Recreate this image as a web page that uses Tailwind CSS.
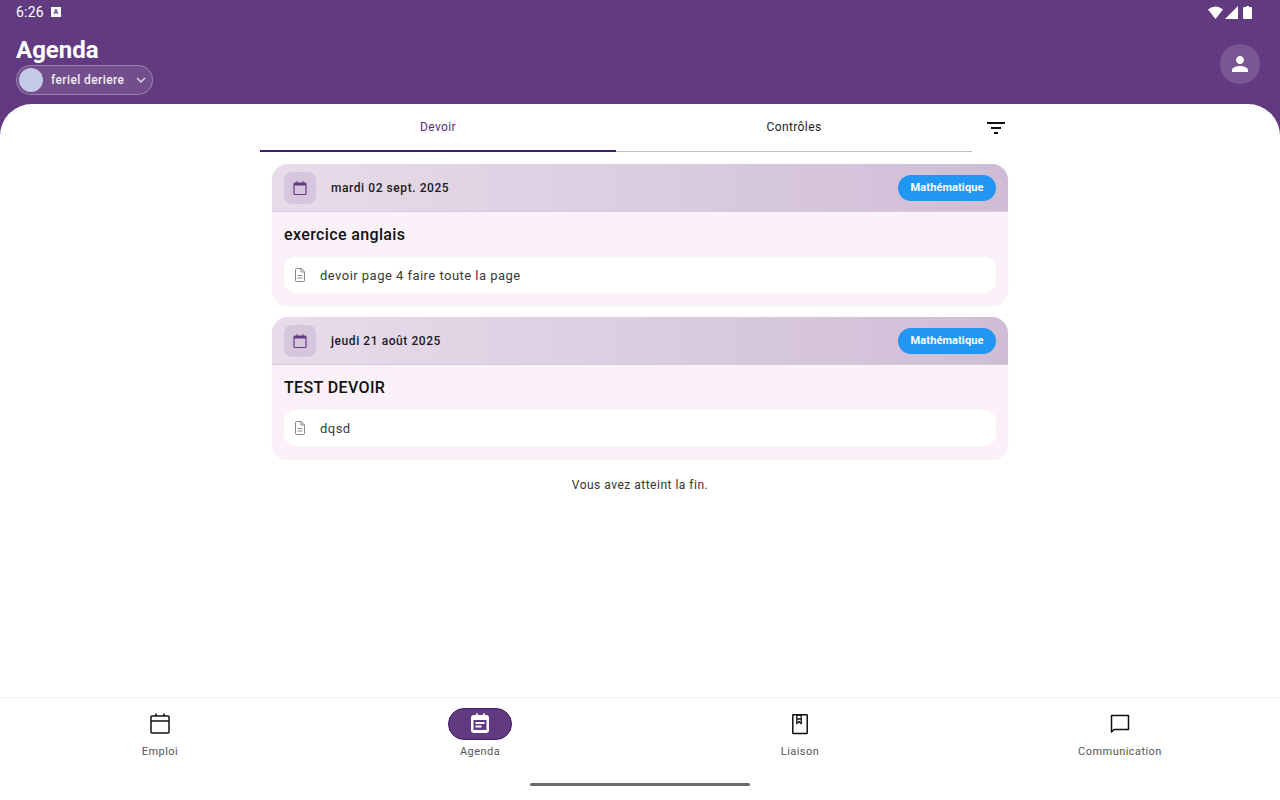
<!DOCTYPE html>
<html lang="fr">
  <head>
    <meta charset="UTF-8" />
    <title>Agenda</title>
    <script src="https://cdn.jsdelivr.net/npm/@tailwindcss/browser@4"></script>
  </head>
  <body class="w-[1280px] h-[800px] overflow-hidden bg-white font-['Roboto',sans-serif]">
    <div class="flex flex-col h-full">
      <!-- en-tete violet -->
      <header class="h-[104px] bg-[#623a80] text-white shrink-0">
        <div class="h-6 flex items-center justify-between pl-4 pr-[28px]">
          <div class="flex items-center gap-[7px]">
            <span class="text-sm leading-6 tracking-[0.2px]">6:26</span>
            <span class="w-[10px] h-[10px] bg-white flex items-center justify-center text-[7px] font-bold leading-none text-[#623a80]">A</span>
          </div>
          <div class="flex items-center gap-[2px]">
            <svg width="15" height="13" viewBox="0 0 15 13"><path d="M0 3.500 Q7.500 -2.500 15 3.500 L7.500 13 Z" fill="#fff" /></svg>
            <svg width="13" height="13" viewBox="0 0 13 13"><path d="M13 0 V13 H0 Z" fill="#fff" /></svg>
            <svg class="ml-[3px]" width="9" height="13" viewBox="0 0 9 13"><path d="M3 0 H6 V1 H8 Q9 1 9 2 V12 Q9 13 8 13 H1 Q0 13 0 12 V2 Q0 1 1 1 H3 Z" fill="#fff" /></svg>
          </div>
        </div>
        <div class="flex items-start justify-between pl-4 pr-5 pt-[10px]">
          <div class="pt-[2px]">
            <h1 class="text-[24px] leading-[28px] font-bold">Agenda</h1>
            <div class="mt-[1px] w-[137px] h-[30px] rounded-full bg-white/10 border border-white/30 flex items-center pl-[2px]">
              <span class="w-6 h-6 rounded-full bg-[#c5cae9]"></span>
              <span class="ml-2 text-xs font-medium tracking-[0.4px] text-white/90">feriel deriere</span>
              <svg class="ml-[11px]" width="12" height="12" viewBox="0 0 12 12" fill="none" stroke="#e6dcec" stroke-width="1.4"><path d="M2 4 L6 8 L10 4" /></svg>
            </div>
          </div>
          <div class="mt-[10px] w-10 h-10 rounded-full bg-white/15 flex items-center justify-center">
            <svg width="24" height="24" viewBox="0 0 24 24" fill="#fff"><path d="M12 12c2.21 0 4-1.790 4-4s-1.790-4-4-4-4 1.790-4 4 1.790 4 4 4zm0 2c-2.670 0-8 1.340-8 4v2h16v-2c0-2.660-5.330-4-8-4z" /></svg>
          </div>
        </div>
      </header>

      <!-- contenu -->
      <div class="flex-1 bg-[#623a80] min-h-0">
        <main class="h-full bg-white rounded-t-[32px]">
          <div class="w-[760px] mx-auto">
            <div class="flex h-[48px]">
              <div class="w-[356px] h-full flex items-start justify-center pt-[15px] border-b-2 border-[#3f1d66] text-xs tracking-[0.4px] text-[#552f80]">Devoir</div>
              <div class="w-[356px] h-full flex items-start justify-center pt-[15px] border-b border-[#c4b8c9] text-xs tracking-[0.4px] text-[#222]">Contrôles</div>
              <div class="flex-1 flex justify-center pt-3">
                <svg width="24" height="24" viewBox="0 0 24 24" fill="#111"><path d="M3 6h18v2H3zM7 11h10v2H7zM10 16h4v2h-4z" /></svg>
              </div>
            </div>

            <div class="px-3 pt-3 flex flex-col gap-[11px]">
              <article class="rounded-2xl bg-[#fbf1f9] overflow-hidden shadow-[0_0_1px_rgba(0,0,0,0.1)]">
                <div class="h-[48px] flex items-center justify-between px-3 bg-linear-to-r from-[#e8dcea] to-[#cfbdd6] border-b border-[#d8c9dd]">
                  <div class="flex items-center">
                    <span class="w-8 h-8 rounded-lg bg-[#d6c6dc] flex items-center justify-center">
                      <svg width="16" height="16" viewBox="0 0 16 16" fill="none"><rect x="2" y="3" width="12" height="11.500" rx="1" stroke="#623a80" stroke-width="1.200" /><path d="M2 3h12v2.500H2zM4.500 1h1v2h-1zM10.500 1h1v2h-1z" fill="#623a80" /></svg>
                    </span>
                    <span class="ml-[15px] text-xs font-medium tracking-[0.57px] text-[#1c1b1f]">mardi 02 sept. 2025</span>
                  </div>
                  <span class="h-[26px] mt-[1px] px-[12.500px] rounded-full bg-[#2196f3] text-white text-[11px] font-bold tracking-[0.1px] flex items-center">Mathématique</span>
                </div>
                <div class="px-3 pt-[13px] pb-[13px]">
                  <h2 class="text-base leading-5 font-medium tracking-[0.37px] text-[#111]">exercice anglais</h2>
                  <div class="mt-[12px] h-[36px] rounded-xl bg-white flex items-center pl-[10px]">
                    <svg width="12" height="16" viewBox="0 0 12 16" fill="none" stroke="#888" stroke-width="1"><path d="M2.500 1.500h5l3 3.500v8.500q0 1-1 1h-7q-1 0-1-1v-11q0-1 1-1zM7 1.500v3.500h3.500M3.500 8.500h5M3.500 11h5" /></svg>
                    <span class="ml-[14px] pt-[1px] text-[13px] tracking-[0.47px] text-[#3a3a3a]">devoir page 4 faire toute la page</span>
                  </div>
                </div>
              </article>

              <article class="rounded-2xl bg-[#fbf1f9] overflow-hidden shadow-[0_0_1px_rgba(0,0,0,0.1)]">
                <div class="h-[48px] flex items-center justify-between px-3 bg-linear-to-r from-[#e8dcea] to-[#cfbdd6] border-b border-[#d8c9dd]">
                  <div class="flex items-center">
                    <span class="w-8 h-8 rounded-lg bg-[#d6c6dc] flex items-center justify-center">
                      <svg width="16" height="16" viewBox="0 0 16 16" fill="none"><rect x="2" y="3" width="12" height="11.500" rx="1" stroke="#623a80" stroke-width="1.200" /><path d="M2 3h12v2.500H2zM4.500 1h1v2h-1zM10.500 1h1v2h-1z" fill="#623a80" /></svg>
                    </span>
                    <span class="ml-[15px] text-xs font-medium tracking-[0.57px] text-[#1c1b1f]">jeudi 21 août 2025</span>
                  </div>
                  <span class="h-[26px] mt-[1px] px-[12.500px] rounded-full bg-[#2196f3] text-white text-[11px] font-bold tracking-[0.1px] flex items-center">Mathématique</span>
                </div>
                <div class="px-3 pt-[13px] pb-[14px]">
                  <h2 class="text-base leading-5 font-medium tracking-[0.37px] text-[#111]">TEST DEVOIR</h2>
                  <div class="mt-[12px] h-[36px] rounded-xl bg-white flex items-center pl-[10px]">
                    <svg width="12" height="16" viewBox="0 0 12 16" fill="none" stroke="#888" stroke-width="1"><path d="M2.500 1.500h5l3 3.500v8.500q0 1-1 1h-7q-1 0-1-1v-11q0-1 1-1zM7 1.500v3.500h3.500M3.500 8.500h5M3.500 11h5" /></svg>
                    <span class="ml-[14px] pt-[1px] text-[13px] tracking-[0.47px] text-[#3a3a3a]">dqsd</span>
                  </div>
                </div>
              </article>
            </div>

            <p class="mt-[17px] text-center text-xs leading-4 tracking-[0.5px] text-[#333]">Vous avez atteint la fin.</p>
          </div>
        </main>
      </div>

      <!-- navigation -->
      <nav class="relative h-[103px] shrink-0 bg-white border-t border-[#f3f1f4] grid grid-cols-4 pt-[10px]">
        <div class="flex flex-col items-center">
          <span class="w-16 h-8 flex items-center justify-center">
            <svg width="24" height="24" viewBox="0 0 24 24" fill="none" stroke="#111" stroke-width="1.500"><rect x="3" y="4" width="18" height="17" rx="1" /><path d="M3 9h18M8 1.500v2.500M16 1.500v2.500" /></svg>
          </span>
          <span class="mt-1 text-[11px] leading-4 tracking-[0.45px] text-[#555]">Emploi</span>
        </div>
        <div class="flex flex-col items-center">
          <span class="w-16 h-8 rounded-full bg-[#623a80] border border-[#3f1d66] flex items-center justify-center">
            <svg width="24" height="24" viewBox="0 0 24 24"><path d="M6 3h2V1.500h2V3h5V1.500h2V3h1a3 3 0 0 1 3 3v12a3 3 0 0 1-3 3H6a3 3 0 0 1-3-3V6a3 3 0 0 1 3-3zM5.500 8v10h13V8zM7.500 10h9v2h-9zM7.500 13.500h6V15.500h-6z" fill="#fff" fill-rule="evenodd" /></svg>
          </span>
          <span class="mt-1 text-[11px] leading-4 tracking-[0.45px] text-[#555]">Agenda</span>
        </div>
        <div class="flex flex-col items-center">
          <span class="w-16 h-8 flex items-center justify-center">
            <svg width="24" height="24" viewBox="0 0 24 24" fill="none" stroke="#111" stroke-width="1.500"><rect x="4.800" y="2.800" width="14.400" height="18.800" rx="0.500" /><path d="M8.800 3v8.500l2.200-1.800 2.200 1.800V3zM8.800 7h4.400" stroke-width="1.300" /></svg>
          </span>
          <span class="mt-1 text-[11px] leading-4 tracking-[0.45px] text-[#555]">Liaison</span>
        </div>
        <div class="flex flex-col items-center">
          <span class="w-16 h-8 flex items-center justify-center">
            <svg width="24" height="24" viewBox="0 0 24 24" fill="none" stroke="#111" stroke-width="1.500"><path d="M3.500 3.500h17v14H6l-2.500 2.500z" stroke-linejoin="round" /></svg>
          </span>
          <span class="mt-1 text-[11px] leading-4 tracking-[0.45px] text-[#555]">Communication</span>
        </div>
        <span class="absolute left-[530px] bottom-[14px] w-[220px] h-[3px] rounded-full bg-[#6b6b6b]"></span>
      </nav>
    </div>
  </body>
</html>
